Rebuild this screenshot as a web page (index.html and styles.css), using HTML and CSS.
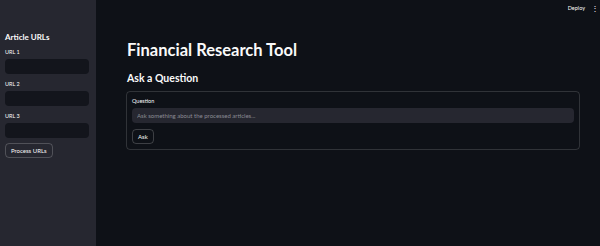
FILE: index.html
```html
<!DOCTYPE html>
<html lang="en">
    <head>
        <meta charset="UTF-8">
        <meta name="viewport" content="width=device-width, initial-scale=1.0">
        <title>Financial Research Tool</title>
        <link rel="stylesheet" href="styles.css">
    </head>
    <body>
        <div class="clApp">
            <!-- Barra lateral com as URLs -->
            <aside class="clSidebar">
                <h3 class="clSideTitulo">Article URLs</h3>
                <div class="clCampo">
                    <label for="idUrl1">URL 1</label>
                    <input type="text" id="idUrl1" class="clInputLateral">
                </div>
                <div class="clCampo">
                    <label for="idUrl2">URL 2</label>
                    <input type="text" id="idUrl2" class="clInputLateral">
                </div>
                <div class="clCampo">
                    <label for="idUrl3">URL 3</label>
                    <input type="text" id="idUrl3" class="clInputLateral">
                </div>
                <button type="button" class="clBotao clBotaoLateral">Process URLs</button>
            </aside>
            <main class="clPrincipal">
                <header class="clTopo">
                    <span class="clDeploy">Deploy</span>
                    <span class="clMenu">&#8942;</span>
                </header>
                <div class="clConteudo">
                    <h1 class="clTitulo">Financial Research Tool</h1>
                    <h2 class="clSubtitulo">Ask a Question</h2>
                    <form class="clForm" action="">
                        <label for="idPergunta">Question</label>
                        <input type="text" id="idPergunta" class="clInputPergunta" placeholder="Ask something about the processed articles...">
                        <button type="button" class="clBotao">Ask</button>
                    </form>
                </div>
            </main>
        </div>
    </body>
</html>
```

FILE: styles.css
```css
*{
    margin: 0px;
    padding: 0px;
    box-sizing: border-box;
}
body{
    background-color: #0e1117;
    color: #fafafa;
    font-family: "Lato", "Open Sans", sans-serif;
}
.clApp{
    display: flex;
    height: 246px;
}
.clSidebar{
    width: 96px;
    background-color: #262730;
    padding: 32px 7px 0px 5px;
    display: flex;
    flex-direction: column;
}
.clSideTitulo{
    font-size: 8px;
    font-weight: 700;
    margin-bottom: 7px;
}
.clCampo{
    display: flex;
    flex-direction: column;
    margin-bottom: 7px;
}
label{
    font-size: 5.5px;
    line-height: 7px;
    margin-bottom: 3px;
}
.clInputLateral{
    height: 15px;
    background-color: #13151c;
    border: none;
    border-radius: 4px;
}
.clBotao{
    align-self: flex-start;
    background-color: transparent;
    color: #fafafa;
    border: 1px solid rgba(250, 250, 250, 0.2);
    border-radius: 4px;
    font-family: inherit;
    font-size: 6px;
    padding: 0px 5px;
    height: 15px;
}
.clBotaoLateral{
    margin-top: -2px;
}
.clPrincipal{
    flex: 1;
    display: flex;
    flex-direction: column;
}
.clTopo{
    display: flex;
    justify-content: flex-end;
    align-items: center;
    gap: 6px;
    height: 15px;
    padding-right: 1px;
    font-size: 5.5px;
}
.clMenu{
    font-size: 8px;
}
.clConteudo{
    padding: 25px 20px 0px 30px;
}
.clTitulo{
    font-size: 16.5px;
    font-weight: 700;
    margin-bottom: 12px;
    padding-left: 1px;
}
.clSubtitulo{
    font-size: 10.5px;
    font-weight: 700;
    margin-bottom: 7px;
    padding-left: 1px;
}
.clForm{
    display: flex;
    flex-direction: column;
    border: 1px solid rgba(250, 250, 250, 0.15);
    border-radius: 4px;
    padding: 6px 5px 5px 5px;
}
.clInputPergunta{
    height: 15px;
    background-color: #262730;
    border: none;
    border-radius: 4px;
    color: #fafafa;
    font-family: inherit;
    font-size: 6px;
    padding-left: 5px;
    margin-bottom: 6px;
}
.clInputPergunta::placeholder{
    color: #8b8c94;
}
```
